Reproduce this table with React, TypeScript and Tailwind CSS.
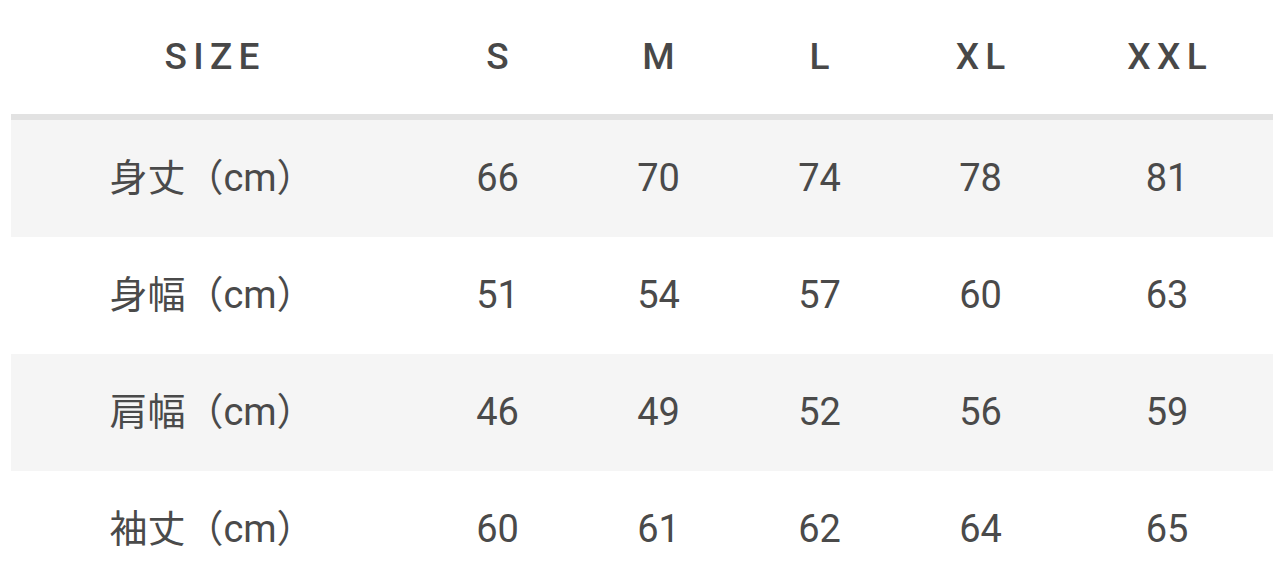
const sizes = ["S", "M", "L", "XL", "XXL"];

const rows = [
  { label: "身丈（cm）", values: [66, 70, 74, 78, 81] },
  { label: "身幅（cm）", values: [51, 54, 57, 60, 63] },
  { label: "肩幅（cm）", values: [46, 49, 52, 56, 59] },
  { label: "袖丈（cm）", values: [60, 61, 62, 64, 65] },
];

const font = "font-['Roboto','Noto_Sans_CJK_JP',sans-serif]";

export default function App() {
  return (
    <div className={`w-[1280px] h-[573px] overflow-hidden bg-white ${font} text-[#4a4a4a]`}>
      <div className="ml-[11px] w-[1262px]">
        {/* header */}
        <div className="grid grid-cols-[406px_161px_161px_161px_161px_1fr] h-[120px] items-center border-b-[6px] border-[#e2e2e2]">
          <div className="text-center pr-1 text-[37px] font-medium tracking-[0.17em] pl-[0.17em] text-[#484848]">
            SIZE
          </div>
          {sizes.map((s) => (
            <div
              key={s}
              className="text-center text-[37px] font-medium tracking-[0.17em] pl-[0.17em] text-[#484848]"
            >
              {s}
            </div>
          ))}
        </div>

        {/* rows */}
        {rows.map((r, i) => (
          <div
            key={r.label}
            className={`grid grid-cols-[406px_161px_161px_161px_161px_1fr] h-[117px] items-center text-[38px] ${
              i % 2 === 0 ? "bg-[#f5f5f5]" : "bg-white"
            }`}
          >
            <div className="text-center pr-1">{r.label}</div>
            {r.values.map((v, j) => (
              <div key={j} className="text-center">
                {v}
              </div>
            ))}
          </div>
        ))}
      </div>
    </div>
  );
}
